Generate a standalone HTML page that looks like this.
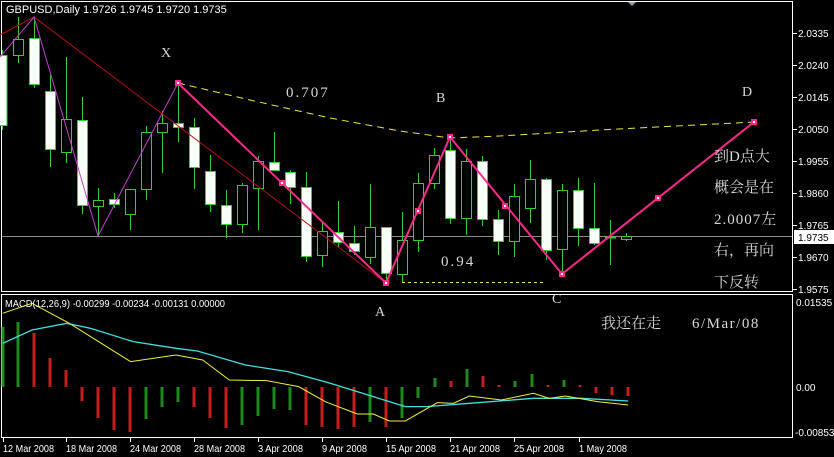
<!DOCTYPE html>
<html><head><meta charset="utf-8"><style>
html,body{margin:0;padding:0;background:#000;width:834px;height:457px;overflow:hidden}
svg{display:block}
.ax{font-family:"Liberation Sans",sans-serif;font-size:10px;fill:#fff}
.lb{font-family:"Liberation Serif","Noto Serif CJK SC",serif;fill:#d8d8d8}
.cn{font-family:"Liberation Serif","Noto Serif CJK SC",serif;fill:#d8d8d8;font-size:15px}
</style></head><body>
<svg width="834" height="457" viewBox="0 0 834 457" xmlns="http://www.w3.org/2000/svg">
<rect width="834" height="457" fill="#000"/>
<rect x="1.5" y="1.5" width="791" height="290" fill="none" stroke="#fff" stroke-width="1"/>
<rect x="1.5" y="294.5" width="791" height="143" fill="none" stroke="#fff" stroke-width="1"/>
<polygon points="628,2 636,2 632,6" fill="#8fa0b0"/>
<line x1="2" y1="236.5" x2="792" y2="236.5" stroke="#8a8a8a"/>
<g stroke="#2fd12f" stroke-width="1">
<line x1="2.5" y1="50" x2="2.5" y2="130"/><rect x="-3" y="55.5" width="10" height="70" fill="#fff"/>
<line x1="18.5" y1="17" x2="18.5" y2="63"/><rect x="13.5" y="39.5" width="10" height="16" fill="#000"/>
<line x1="34.5" y1="17" x2="34.5" y2="88"/><rect x="29.5" y="38.5" width="10" height="46" fill="#fff"/>
<line x1="50.5" y1="75" x2="50.5" y2="167"/><rect x="45.5" y="91.5" width="10" height="58" fill="#fff"/>
<line x1="66.5" y1="57" x2="66.5" y2="163"/><rect x="61.5" y="119.5" width="10" height="33" fill="#000"/>
<line x1="82.5" y1="97" x2="82.5" y2="214"/><rect x="77.5" y="120.5" width="10" height="85" fill="#fff"/>
<line x1="98.5" y1="188" x2="98.5" y2="236"/><rect x="93.5" y="200.5" width="10" height="6" fill="#000"/>
<line x1="114.5" y1="193" x2="114.5" y2="208"/><rect x="109.5" y="199.5" width="10" height="5" fill="#fff"/>
<line x1="130.5" y1="189" x2="130.5" y2="230"/><rect x="125.5" y="189.5" width="10" height="25" fill="#000"/>
<line x1="146.5" y1="126" x2="146.5" y2="200"/><rect x="141.5" y="132.5" width="10" height="57" fill="#000"/>
<line x1="162.5" y1="111" x2="162.5" y2="173"/><rect x="157.5" y="123.5" width="10" height="9" fill="#000"/>
<line x1="178.5" y1="82" x2="178.5" y2="142"/><rect x="173.5" y="123.5" width="10" height="4" fill="#fff"/>
<line x1="194.5" y1="118" x2="194.5" y2="189"/><rect x="189.5" y="127.5" width="10" height="40" fill="#fff"/>
<line x1="210.5" y1="155" x2="210.5" y2="212"/><rect x="205.5" y="171.5" width="10" height="33" fill="#fff"/>
<line x1="226.5" y1="190" x2="226.5" y2="238"/><rect x="221.5" y="205.5" width="10" height="19" fill="#fff"/>
<line x1="242.5" y1="183" x2="242.5" y2="233"/><rect x="237.5" y="185.5" width="10" height="39" fill="#000"/>
<line x1="258.5" y1="156" x2="258.5" y2="230"/><rect x="253.5" y="161.5" width="10" height="27" fill="#000"/>
<line x1="274.5" y1="132" x2="274.5" y2="170"/><rect x="269.5" y="162.5" width="10" height="8" fill="#fff"/>
<line x1="290.5" y1="170" x2="290.5" y2="204"/><rect x="285.5" y="172.5" width="10" height="15" fill="#fff"/>
<line x1="306.5" y1="172" x2="306.5" y2="262"/><rect x="301.5" y="187.5" width="10" height="69" fill="#fff"/>
<line x1="322.5" y1="223" x2="322.5" y2="267"/><rect x="317.5" y="231.5" width="10" height="24" fill="#000"/>
<line x1="338.5" y1="201" x2="338.5" y2="248"/><rect x="333.5" y="232.5" width="10" height="10" fill="#fff"/>
<line x1="354.5" y1="226" x2="354.5" y2="255"/><rect x="349.5" y="243.5" width="10" height="8" fill="#fff"/>
<line x1="370.5" y1="184" x2="370.5" y2="264"/><rect x="365.5" y="227.5" width="10" height="30" fill="#000"/>
<line x1="386.5" y1="227" x2="386.5" y2="280"/><rect x="381.5" y="227.5" width="10" height="46" fill="#fff"/>
<line x1="402.5" y1="212" x2="402.5" y2="283"/><rect x="397.5" y="240.5" width="10" height="34" fill="#000"/>
<line x1="418.5" y1="173" x2="418.5" y2="252"/><rect x="413.5" y="183.5" width="10" height="57" fill="#000"/>
<line x1="434.5" y1="148" x2="434.5" y2="189"/><rect x="429.5" y="155.5" width="10" height="28" fill="#000"/>
<line x1="450.5" y1="137" x2="450.5" y2="224"/><rect x="445.5" y="150.5" width="10" height="68" fill="#fff"/>
<line x1="466.5" y1="149" x2="466.5" y2="235"/><rect x="461.5" y="161.5" width="10" height="57" fill="#000"/>
<line x1="482.5" y1="156" x2="482.5" y2="226"/><rect x="477.5" y="161.5" width="10" height="58" fill="#fff"/>
<line x1="498.5" y1="210" x2="498.5" y2="255"/><rect x="493.5" y="219.5" width="10" height="22" fill="#fff"/>
<line x1="514.5" y1="184" x2="514.5" y2="257"/><rect x="509.5" y="196.5" width="10" height="45" fill="#000"/>
<line x1="530.5" y1="160" x2="530.5" y2="223"/><rect x="525.5" y="179.5" width="10" height="29" fill="#000"/>
<line x1="546.5" y1="178" x2="546.5" y2="260"/><rect x="541.5" y="179.5" width="10" height="71" fill="#fff"/>
<line x1="562.5" y1="184" x2="562.5" y2="274"/><rect x="557.5" y="190.5" width="10" height="59" fill="#000"/>
<line x1="578.5" y1="178" x2="578.5" y2="246"/><rect x="573.5" y="190.5" width="10" height="38" fill="#fff"/>
<line x1="594.5" y1="183" x2="594.5" y2="245"/><rect x="589.5" y="228.5" width="10" height="15" fill="#fff"/>
<line x1="610.5" y1="220" x2="610.5" y2="265"/><line x1="605" y1="237.5" x2="616" y2="237.5" stroke-width="2"/>
<line x1="626.5" y1="233" x2="626.5" y2="241"/><rect x="621.5" y="236.5" width="10" height="3" fill="#000"/>
</g>
<polyline points="0,35 34,17 386,283" fill="none" stroke="#b01010" stroke-width="1"/>
<polyline points="0,57 34,17 98,236 178,83" fill="none" stroke="#c040d0" stroke-width="1"/>
<polyline points="178,83 250,100 330,118 400,131 450,138 500,136 600,130 754,122" fill="none" stroke="#e8e840" stroke-width="1" stroke-dasharray="7,5"/>
<line x1="402" y1="282.5" x2="543" y2="282.5" stroke="#e8e840" stroke-dasharray="3,3"/>
<polyline points="178,83 386,283 450,137 562,274 754,122" fill="none" stroke="#ff2a8a" stroke-width="2"/>
<g fill="#fff" stroke="#ff2a8a" stroke-width="2">
<rect x="176" y="81" width="4" height="4"/><rect x="280" y="181" width="4" height="4"/><rect x="384" y="281" width="4" height="4"/>
<rect x="416" y="209" width="4" height="4"/><rect x="448" y="135" width="4" height="4"/><rect x="503" y="204" width="4" height="4"/>
<rect x="560" y="272" width="4" height="4"/><rect x="656" y="196" width="4" height="4"/><rect x="752" y="120" width="4" height="4"/>
</g>
<text x="6" y="13" class="ax" style="font-size:11px">GBPUSD,Daily  1.9726 1.9745 1.9720 1.9735</text>
<text x="161" y="57" class="lb" font-size="14">X</text>
<text x="286" y="97" class="lb" font-size="15" letter-spacing="2">0.707</text>
<text x="436" y="102" class="lb" font-size="14">B</text>
<text x="742" y="96" class="lb" font-size="14">D</text>
<text x="441" y="266" class="lb" font-size="15" letter-spacing="2">0.94</text>
<text x="375" y="316" class="lb" font-size="14">A</text>
<text x="552" y="303" class="lb" font-size="14">C</text>
<text x="714" y="161" class="cn">到D点大</text>
<text x="714" y="192" class="cn">概会是在</text>
<text x="714" y="224" class="cn" letter-spacing="1">2.0007左</text>
<text x="714" y="255" class="cn">右，再向</text>
<text x="714" y="287" class="cn">下反转</text>
<text x="601" y="328" class="cn" font-size="16">我还在走</text>
<text x="692" y="328" class="cn" font-size="16" letter-spacing="1.5">6/Mar/08</text>
<g stroke="#fff"><line x1="793" y1="33.5" x2="797" y2="33.5"/><line x1="793" y1="65.5" x2="797" y2="65.5"/><line x1="793" y1="97.5" x2="797" y2="97.5"/><line x1="793" y1="129.5" x2="797" y2="129.5"/><line x1="793" y1="161.5" x2="797" y2="161.5"/><line x1="793" y1="193.5" x2="797" y2="193.5"/><line x1="793" y1="225.5" x2="797" y2="225.5"/><line x1="793" y1="257.5" x2="797" y2="257.5"/><line x1="793" y1="289.5" x2="797" y2="289.5"/></g>
<g class="ax">
<text x="798" y="37">2.0335</text><text x="798" y="69">2.0240</text><text x="798" y="101">2.0145</text><text x="798" y="133">2.0050</text><text x="798" y="165">1.9955</text><text x="798" y="197">1.9860</text><text x="798" y="229">1.9765</text><text x="798" y="261">1.9670</text><text x="798" y="293">1.9575</text>
<text x="796" y="306">0.01535</text><text x="796" y="391">0.00</text><text x="795" y="436">-0.00853</text>
</g>
<rect x="794" y="230" width="40" height="14" fill="#fff"/>
<text x="798" y="241" class="ax" style="fill:#000">1.9735</text>
<text x="5" y="307" class="ax" style="font-size:10px" textLength="220" lengthAdjust="spacingAndGlyphs">MACD(12,26,9) -0.00299 -0.00234 -0.00131 0.00000</text>
<g stroke-width="3">
<line x1="3" y1="387" x2="3" y2="327" stroke="#1e8a1e"/>
<line x1="18" y1="387" x2="18" y2="322" stroke="#1e8a1e"/>
<line x1="34" y1="387" x2="34" y2="333" stroke="#c81e1e"/>
<line x1="50" y1="387" x2="50" y2="358" stroke="#c81e1e"/>
<line x1="66" y1="387" x2="66" y2="370" stroke="#c81e1e"/>
<line x1="82" y1="387" x2="82" y2="401" stroke="#c81e1e"/>
<line x1="98" y1="387" x2="98" y2="418" stroke="#c81e1e"/>
<line x1="114" y1="387" x2="114" y2="430" stroke="#c81e1e"/>
<line x1="130" y1="387" x2="130" y2="432" stroke="#c81e1e"/>
<line x1="146" y1="387" x2="146" y2="419" stroke="#1e8a1e"/>
<line x1="162" y1="387" x2="162" y2="407" stroke="#1e8a1e"/>
<line x1="178" y1="387" x2="178" y2="402" stroke="#1e8a1e"/>
<line x1="194" y1="387" x2="194" y2="407" stroke="#c81e1e"/>
<line x1="210" y1="387" x2="210" y2="418" stroke="#c81e1e"/>
<line x1="226" y1="387" x2="226" y2="428" stroke="#c81e1e"/>
<line x1="242" y1="387" x2="242" y2="425" stroke="#1e8a1e"/>
<line x1="258" y1="387" x2="258" y2="416" stroke="#1e8a1e"/>
<line x1="274" y1="387" x2="274" y2="409" stroke="#1e8a1e"/>
<line x1="290" y1="387" x2="290" y2="410" stroke="#1e8a1e"/>
<line x1="306" y1="387" x2="306" y2="425" stroke="#c81e1e"/>
<line x1="322" y1="387" x2="322" y2="427" stroke="#c81e1e"/>
<line x1="338" y1="387" x2="338" y2="429" stroke="#c81e1e"/>
<line x1="354" y1="387" x2="354" y2="427" stroke="#c81e1e"/>
<line x1="370" y1="387" x2="370" y2="422" stroke="#1e8a1e"/>
<line x1="386" y1="387" x2="386" y2="427" stroke="#c81e1e"/>
<line x1="402" y1="387" x2="402" y2="418" stroke="#1e8a1e"/>
<line x1="418" y1="387" x2="418" y2="398" stroke="#1e8a1e"/>
<line x1="435" y1="387" x2="435" y2="378" stroke="#1e8a1e"/>
<line x1="451" y1="387" x2="451" y2="381" stroke="#c81e1e"/>
<line x1="467" y1="387" x2="467" y2="369" stroke="#1e8a1e"/>
<line x1="483" y1="387" x2="483" y2="376" stroke="#c81e1e"/>
<line x1="499" y1="387" x2="499" y2="385" stroke="#c81e1e"/>
<line x1="515" y1="387" x2="515" y2="381" stroke="#1e8a1e"/>
<line x1="532" y1="387" x2="532" y2="374" stroke="#1e8a1e"/>
<line x1="548" y1="387" x2="548" y2="385" stroke="#c81e1e"/>
<line x1="564" y1="387" x2="564" y2="380" stroke="#1e8a1e"/>
<line x1="580" y1="387" x2="580" y2="385" stroke="#c81e1e"/>
<line x1="596" y1="387" x2="596" y2="393" stroke="#c81e1e"/>
<line x1="612" y1="387" x2="612" y2="395" stroke="#c81e1e"/>
<line x1="628" y1="387" x2="628" y2="396" stroke="#c81e1e"/>
</g>
<g transform="translate(0,290) scale(0.5333,0.3333)" fill="none">
<polyline vector-effect="non-scaling-stroke" stroke="#40e0e0" stroke-width="1.3" points="5,160 60,120 125,100 170,115 250,155 330,175 370,183 460,225 540,245 620,280 700,320 760,350 800,350 880,340 1000,325 1090,325 1178,333"/>
<polyline vector-effect="non-scaling-stroke" stroke="#f0f040" stroke-width="1" points="5,70 60,40 130,100 245,215 330,195 380,210 430,270 500,272 560,290 610,335 670,372 700,372 730,393 760,393 820,338 850,340 880,318 940,330 1000,310 1030,325 1060,318 1120,335 1178,345"/>
</g>
<g stroke="#fff"><line x1="3.5" y1="438" x2="3.5" y2="442"/><line x1="66.5" y1="438" x2="66.5" y2="442"/><line x1="130.5" y1="438" x2="130.5" y2="442"/><line x1="194.5" y1="438" x2="194.5" y2="442"/><line x1="258.5" y1="438" x2="258.5" y2="442"/><line x1="322.5" y1="438" x2="322.5" y2="442"/><line x1="386.5" y1="438" x2="386.5" y2="442"/><line x1="450.5" y1="438" x2="450.5" y2="442"/><line x1="514.5" y1="438" x2="514.5" y2="442"/><line x1="579.5" y1="438" x2="579.5" y2="442"/></g>
<g class="ax">
<text x="3" y="452" textLength="51" lengthAdjust="spacingAndGlyphs">12 Mar 2008</text>
<text x="66" y="452" textLength="51" lengthAdjust="spacingAndGlyphs">18 Mar 2008</text>
<text x="130" y="452" textLength="51" lengthAdjust="spacingAndGlyphs">24 Mar 2008</text>
<text x="194" y="452" textLength="51" lengthAdjust="spacingAndGlyphs">28 Mar 2008</text>
<text x="258" y="452" textLength="45" lengthAdjust="spacingAndGlyphs">3 Apr 2008</text>
<text x="322" y="452" textLength="45" lengthAdjust="spacingAndGlyphs">9 Apr 2008</text>
<text x="386" y="452" textLength="50" lengthAdjust="spacingAndGlyphs">15 Apr 2008</text>
<text x="450" y="452" textLength="50" lengthAdjust="spacingAndGlyphs">21 Apr 2008</text>
<text x="514" y="452" textLength="50" lengthAdjust="spacingAndGlyphs">25 Apr 2008</text>
<text x="579" y="452" textLength="48" lengthAdjust="spacingAndGlyphs">1 May 2008</text>
</g>
</svg>
</body></html>
